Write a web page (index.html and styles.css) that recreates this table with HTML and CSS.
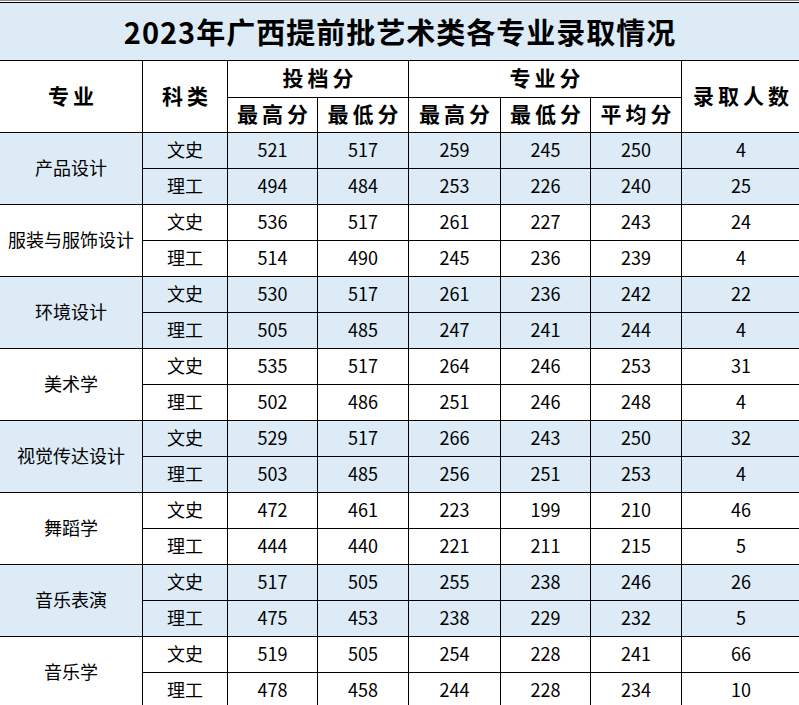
FILE: index.html
```html
<!DOCTYPE html>
<html lang="zh-CN">
<head>
<meta charset="utf-8">
<title>2023年广西提前批艺术类各专业录取情况</title>
<link rel="stylesheet" href="styles.css">
</head>
<body>
<div class="sheet">
  <div class="grid">
    <div class="cell title span-all">2023年广西提前批艺术类各专业录取情况</div>

    <div class="cell head r2">专业</div>
    <div class="cell head r2">科类</div>
    <div class="cell head c2">投档分</div>
    <div class="cell head c3">专业分</div>
    <div class="cell head r2">录取人数</div>
    <div class="cell head">最高分</div>
    <div class="cell head">最低分</div>
    <div class="cell head">最高分</div>
    <div class="cell head">最低分</div>
    <div class="cell head">平均分</div>

    <div class="cell blue r2">产品设计</div>
    <div class="cell blue">文史</div><div class="cell blue">521</div><div class="cell blue">517</div><div class="cell blue">259</div><div class="cell blue">245</div><div class="cell blue">250</div><div class="cell blue">4</div>
    <div class="cell blue">理工</div><div class="cell blue">494</div><div class="cell blue">484</div><div class="cell blue">253</div><div class="cell blue">226</div><div class="cell blue">240</div><div class="cell blue">25</div>

    <div class="cell r2">服装与服饰设计</div>
    <div class="cell">文史</div><div class="cell">536</div><div class="cell">517</div><div class="cell">261</div><div class="cell">227</div><div class="cell">243</div><div class="cell">24</div>
    <div class="cell">理工</div><div class="cell">514</div><div class="cell">490</div><div class="cell">245</div><div class="cell">236</div><div class="cell">239</div><div class="cell">4</div>

    <div class="cell blue r2">环境设计</div>
    <div class="cell blue">文史</div><div class="cell blue">530</div><div class="cell blue">517</div><div class="cell blue">261</div><div class="cell blue">236</div><div class="cell blue">242</div><div class="cell blue">22</div>
    <div class="cell blue">理工</div><div class="cell blue">505</div><div class="cell blue">485</div><div class="cell blue">247</div><div class="cell blue">241</div><div class="cell blue">244</div><div class="cell blue">4</div>

    <div class="cell r2">美术学</div>
    <div class="cell">文史</div><div class="cell">535</div><div class="cell">517</div><div class="cell">264</div><div class="cell">246</div><div class="cell">253</div><div class="cell">31</div>
    <div class="cell">理工</div><div class="cell">502</div><div class="cell">486</div><div class="cell">251</div><div class="cell">246</div><div class="cell">248</div><div class="cell">4</div>

    <div class="cell blue r2">视觉传达设计</div>
    <div class="cell blue">文史</div><div class="cell blue">529</div><div class="cell blue">517</div><div class="cell blue">266</div><div class="cell blue">243</div><div class="cell blue">250</div><div class="cell blue">32</div>
    <div class="cell blue">理工</div><div class="cell blue">503</div><div class="cell blue">485</div><div class="cell blue">256</div><div class="cell blue">251</div><div class="cell blue">253</div><div class="cell blue">4</div>

    <div class="cell r2">舞蹈学</div>
    <div class="cell">文史</div><div class="cell">472</div><div class="cell">461</div><div class="cell">223</div><div class="cell">199</div><div class="cell">210</div><div class="cell">46</div>
    <div class="cell">理工</div><div class="cell">444</div><div class="cell">440</div><div class="cell">221</div><div class="cell">211</div><div class="cell">215</div><div class="cell">5</div>

    <div class="cell blue r2">音乐表演</div>
    <div class="cell blue">文史</div><div class="cell blue">517</div><div class="cell blue">505</div><div class="cell blue">255</div><div class="cell blue">238</div><div class="cell blue">246</div><div class="cell blue">26</div>
    <div class="cell blue">理工</div><div class="cell blue">475</div><div class="cell blue">453</div><div class="cell blue">238</div><div class="cell blue">229</div><div class="cell blue">232</div><div class="cell blue">5</div>

    <div class="cell r2">音乐学</div>
    <div class="cell">文史</div><div class="cell">519</div><div class="cell">505</div><div class="cell">254</div><div class="cell">228</div><div class="cell">241</div><div class="cell">66</div>
    <div class="cell">理工</div><div class="cell">478</div><div class="cell">458</div><div class="cell">244</div><div class="cell">228</div><div class="cell">234</div><div class="cell">10</div>
  </div>
</div>
</body>
</html>
```
FILE: styles.css
```css
html, body {
  margin: 0;
  padding: 0;
  background: #ffffff;
  overflow: hidden;
}

.sheet {
  width: 800px;
  border-top: 1px solid #8a8a8a;
  padding-top: 1px;
  background: #ffffff;
}

.grid {
  display: grid;
  grid-template-columns: 142px 84px 89px 90px 91px 89px 90px 118px;
  grid-template-rows: 57px 36px 34px;
  grid-auto-rows: 35px;
  gap: 1px;
  padding-top: 1px;
  background: #000000;
  font-family: "Noto Sans CJK SC", "Noto Sans", sans-serif;
  color: #000000;
}

.cell {
  background: #ffffff;
  display: flex;
  align-items: center;
  justify-content: center;
  font-size: 18px;
  line-height: 1;
  white-space: nowrap;
  padding-bottom: 3px;
}

.blue {
  background: #ddebf7;
}

.title {
  background: #ddebf7;
  font-size: 29px;
  font-weight: bold;
  letter-spacing: 1px;
  padding-bottom: 1px;
}

.span-all {
  grid-column: 1 / -1;
}

.head {
  font-size: 21px;
  font-weight: bold;
  letter-spacing: 4px;
  text-indent: 4px;
}

.r2 {
  grid-row: span 2;
}

.c2 {
  grid-column: span 2;
}

.c3 {
  grid-column: span 3;
}
```
